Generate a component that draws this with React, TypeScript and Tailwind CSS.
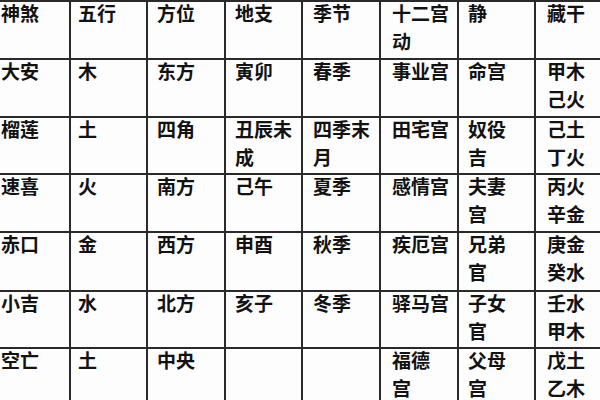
const ROWS: string[][][] = [
  [["神煞"], ["五行"], ["方位"], ["地支"], ["季节"], ["十二宫", "动"], ["静"], ["藏干"]],
  [["大安"], ["木"], ["东方"], ["寅卯"], ["春季"], ["事业宫"], ["命宫"], ["甲木", "己火"]],
  [["榴莲"], ["土"], ["四角"], ["丑辰未", "成"], ["四季末", "月"], ["田宅宫"], ["奴役", "吉"], ["己土", "丁火"]],
  [["速喜"], ["火"], ["南方"], ["己午"], ["夏季"], ["感情宫"], ["夫妻", "宫"], ["丙火", "辛金"]],
  [["赤口"], ["金"], ["西方"], ["申酉"], ["秋季"], ["疾厄宫"], ["兄弟", "官"], ["庚金", "癸水"]],
  [["小吉"], ["水"], ["北方"], ["亥子"], ["冬季"], ["驿马宫"], ["子女", "官"], ["壬水", "甲木"]],
  [["空亡"], ["土"], ["中央"], [], [], ["福德", "宫"], ["父母", "宫"], ["戊土", "乙木"]],
];

// left padding per column, measured from the screenshot
const PAD = ["pl-[1px]", "pl-[7px]", "pl-[9px]", "pl-[9px]", "pl-[10px]", "pl-[11px]", "pl-[9px]", "pl-[11px]"];

export default function App() {
  return (
    <div className="w-[600px] h-[400px] overflow-hidden bg-[#fdfdfd]">
      <div
        className="grid grid-cols-[71px_77px_78px_77px_78px_78px_77px_1fr] grid-rows-[58px_58px_57px_58px_59px_57px_60px] border-t-2 border-[#2a2a2a] text-[19px] leading-[28px] text-[#121212] font-semibold"
        style={{ fontFamily: '"Noto Sans CJK SC", "Noto Sans", sans-serif' }}
      >
        {ROWS.map((row, r) =>
          row.map((lines, c) => (
            <div
              key={`${r}-${c}`}
              className={`${PAD[c]} whitespace-nowrap border-b-2 border-[#2a2a2a] ${c < 7 ? "border-r-2" : ""}`}
            >
              <div className="-mt-[3px]">
                {lines.map((t, i) => (
                  <div key={i}>{t}</div>
                ))}
              </div>
            </div>
          ))
        )}
      </div>
    </div>
  );
}
